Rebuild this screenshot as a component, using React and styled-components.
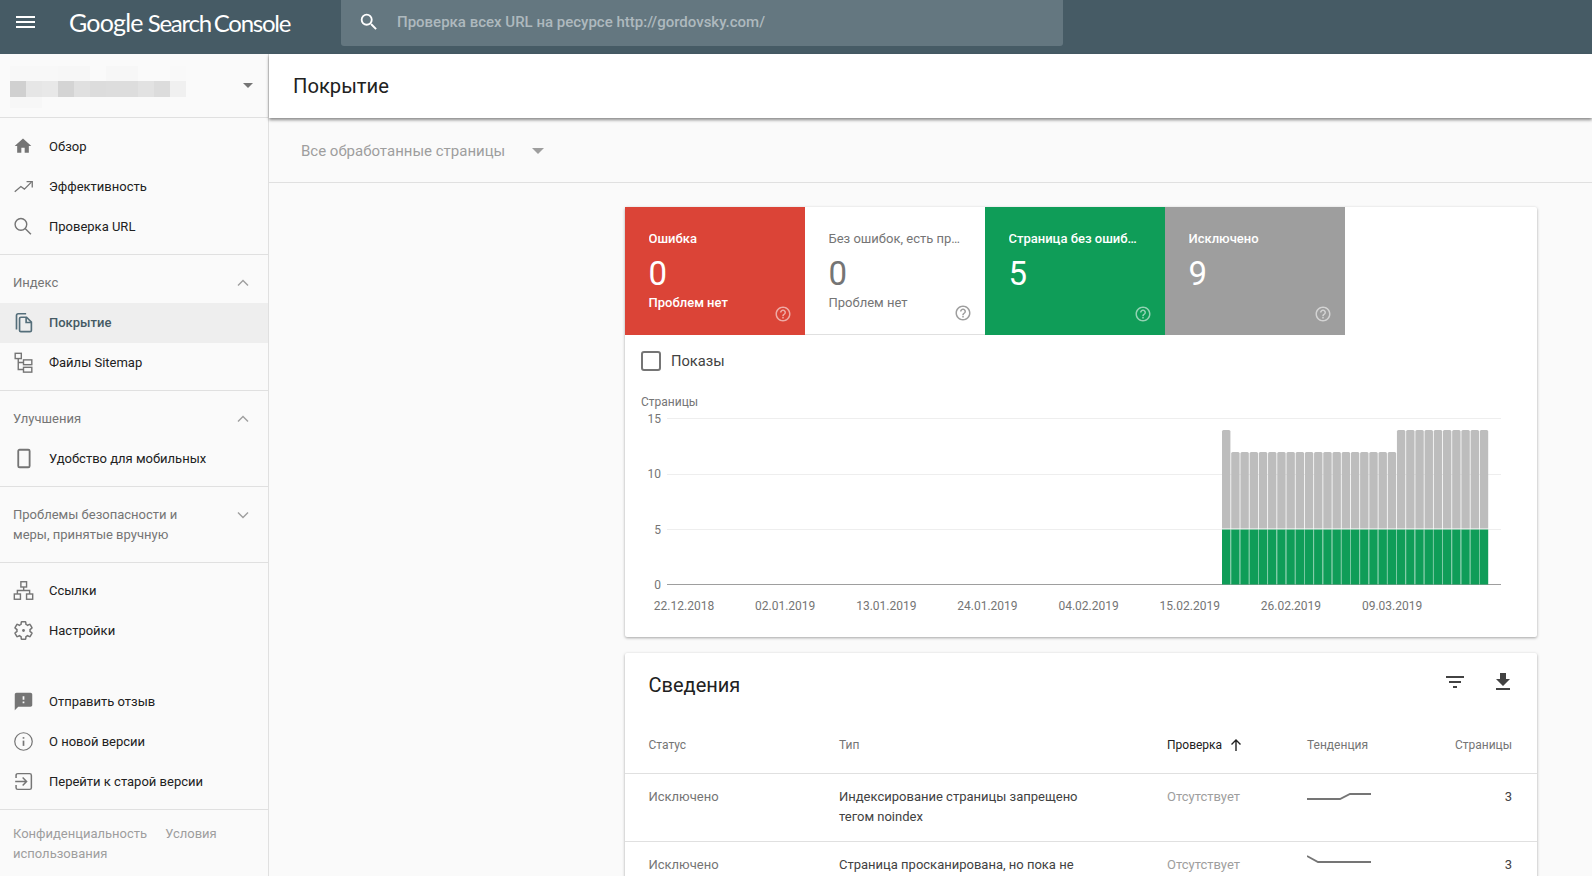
import React from 'react';
import styled, { createGlobalStyle } from 'styled-components';

const Global = createGlobalStyle`
  html, body { margin: 0; padding: 0; height: 100%; overflow: hidden; background: #fafafa; }
  body { font-family: Roboto, "Liberation Sans", sans-serif; color: #212121; }
  * { box-sizing: border-box; }
`;

const Page = styled.div`display: flex; flex-direction: column; height: 876px; overflow: hidden;`;
const TopBar = styled.header`height: 54px; flex: none; background: #465b65; display: flex; align-items: flex-start;`;
const MenuBtn = styled.div`width: 51px; height: 44px; display: flex; align-items: center; justify-content: center; color: #fff;`;
const Logo = styled.div`
  width: 290px; height: 44px; display: flex; align-items: center; padding-left: 18px; color: #fff;
  font-family: Lato, sans-serif; white-space: pre;
`;
const LogoBrand = styled.span`font-size: 25px; font-weight: 400; letter-spacing: -0.8px; margin-right: 5px;`;
const LogoProduct = styled.span`font-size: 24px; font-weight: 400; letter-spacing: -1.25px; word-spacing: -2px;`;
const SearchBox = styled.div`
  width: 722px; height: 46px; background: #647780; border-radius: 0 0 3px 3px;
  display: flex; align-items: center; padding: 0 0 2px 17px; gap: 17px; color: #fff;
`;
const SearchText = styled.span`font-size: 15px; font-weight: 500; color: #aeb9be;`;

const Body = styled.div`display: flex; flex: 1; min-height: 0;`;
const Side = styled.aside`width: 269px; flex: none; border-right: 1px solid #e0e0e0; background: #fafafa;`;
const Picker = styled.div`height: 64px; display: flex; align-items: center; justify-content: space-between; padding: 3px 15px 0 10px; border-bottom: 1px solid #e0e0e0;`;
const Mosaic = styled.div`display: flex; flex-direction: column;`;
const MosaicRow = styled.div`display: flex; height: ${p => p.$h}px;`;
const MosaicCell = styled.div`width: 16px; height: 100%; background: ${p => p.$c};`;
const Caret = styled.div`
  width: 0; height: 0; margin-bottom: ${p => p.$mb || 0}px;
  border-left: ${p => p.$s || 5}px solid transparent; border-right: ${p => p.$s || 5}px solid transparent;
  border-top: ${p => p.$s || 5}px solid ${p => p.$c || '#757575'};
`;

const Group = styled.div`
  border-bottom: ${p => p.$noline ? 'none' : '1px solid #e0e0e0'};
  padding: ${p => p.$pad || '9px 0'};
`;
const Item = styled.div`
  height: 40px; display: flex; align-items: center; padding: 0 0 ${p => p.$flat ? 0 : 2}px 13px;
  background: ${p => p.$active ? '#eeeeee' : 'transparent'};
  color: ${p => p.$active ? '#455a64' : '#212121'};
  font-size: 13px; font-weight: ${p => p.$active ? 500 : 400};
`;
const ItemIcon = styled.span`width: 36px; flex: none; display: flex; align-items: center; color: ${p => p.$c || '#757575'};`;
const SectionHead = styled.div`
  display: flex; justify-content: space-between; align-items: ${p => p.$top ? 'flex-start' : 'center'};
  padding: ${p => p.$top ? '10px 19px 0 13px' : '0 19px 0 13px'};
  height: ${p => p.$h || 40}px; color: #757575; font-size: 13px; line-height: 20px;
`;
const ChevWrap = styled.span`display: flex; margin-top: ${p => p.$mt || 0}px;`;
const Foot = styled.div`padding: 14px 13px 0; color: #9e9e9e; font-size: 13px; line-height: 20px;`;
const FootLink = styled.span`display: inline-block; margin-right: ${p => p.$mr || 0}px;`;

const Main = styled.main`flex: 1; min-width: 0; display: flex; flex-direction: column;`;
const TitleBar = styled.div`
  height: 64px; flex: none; background: #fff; display: flex; align-items: center; padding-left: 24px;
  font-size: 20.2px; font-weight: 400; color: #212121; box-shadow: 0 2px 3px rgba(0,0,0,.45); position: relative; z-index: 1;
`;
const FilterBar = styled.div`
  height: 65px; flex: none; display: flex; align-items: center; border-bottom: 1px solid #e0e0e0;
  padding: 2px 0 0 32px; gap: 27px; color: #9e9e9e; font-size: 15px;
`;
const Content = styled.div`width: 912px; margin: 24px 0 0 356px; display: flex; flex-direction: column; gap: 16px;`;
const Card = styled.section`background: #fff; border-radius: 2px; box-shadow: 0 1px 3px rgba(0,0,0,.35);`;
const Tiles = styled.div`display: flex;`;
const Tile = styled.div`
  width: 180px; height: 128px; padding: 23px 23px 0 23.5px; position: relative;
  background: ${p => p.$bg}; color: ${p => p.$fg};
  border-bottom: ${p => p.$bg === '#fff' ? '1px solid #e0e0e0' : 'none'};
`;
const TileLabel = styled.div`
  font-size: 13px; line-height: 17px; font-weight: ${p => p.$bold ? 500 : 400};
  white-space: nowrap; overflow: hidden; text-overflow: ellipsis; width: 132px;
`;
const TileNum = styled.div`font-size: 33px; line-height: 40px; margin-top: 7px;`;
const TileSub = styled.div`font-size: 13px; line-height: 17px; font-weight: ${p => p.$bold ? 500 : 400};`;
const TileHelp = styled.span`position: absolute; right: 13px; bottom: 12px; display: flex; opacity: ${p => p.$o || 1};`;
const CheckRow = styled.div`display: flex; align-items: center; gap: 10px; height: 52px; padding: 0 0 0 16px; font-size: 14.7px; color: #424242;`;
const Check = styled.div`width: 20px; height: 20px; border: 2px solid #757575; border-radius: 3px;`;
const Chart = styled.svg`display: block; width: 912px; height: 250px;`;
const DetailHead = styled.div`height: 72px; display: flex; align-items: center; justify-content: space-between; padding: 0 22px 8px 23.5px;`;
const DetailTitle = styled.h2`margin: 0; font-size: 20px; font-weight: 400; color: #212121;`;
const Tools = styled.div`display: flex; gap: 24px; margin-top: -7px;`;
const Row = styled.div`
  display: grid; grid-template-columns: 190.5px 328px 140px 1fr 70px; padding: 0 25px 0 23.5px;
  border-bottom: 1px solid #e0e0e0; font-size: 13px; line-height: 20px;
  height: ${p => p.$h}px; align-items: ${p => p.$head ? 'center' : 'start'};
  padding-top: ${p => p.$head ? 0 : 13}px;
  padding-bottom: ${p => p.$head ? 9 : 0}px;
`;
const HeadCell = styled.div`color: ${p => p.$on ? '#212121' : '#757575'}; display: flex; align-items: center; justify-content: ${p => p.$right ? 'flex-end' : 'flex-start'}; gap: 7px; font-size: 12px;`;
const Cell = styled.div`color: ${p => p.$c || '#757575'}; text-align: ${p => p.$right ? 'right' : 'left'};`;
const TypeCell = styled(Cell)`width: 260px;`;

const Svg = ({ s = 20, children }) => (
  <svg width={s} height={s} viewBox="0 0 24 24" fill="currentColor">{children}</svg>
);
const Line = ({ s = 21, w = 1.6, children }) => (
  <svg width={s} height={s} viewBox="0 0 24 24" fill="none" stroke="currentColor" strokeWidth={w}>{children}</svg>
);
const Help = ({ c }) => (
  <svg width="18" height="18" viewBox="0 0 24 24" fill={c}>
    <path d="M11 18h2v-2h-2v2zm1-16C6.48 2 2 6.48 2 12s4.48 10 10 10 10-4.48 10-10S17.52 2 12 2zm0 18c-4.41 0-8-3.59-8-8s3.59-8 8-8 8 3.59 8 8-3.59 8-8 8zm0-14c-2.21 0-4 1.79-4 4h2c0-1.1.9-2 2-2s2 .9 2 2c0 2-3 1.75-3 5h2c0-2.25 3-2.5 3-5 0-2.21-1.79-4-4-4z"/>
  </svg>
);
const Chev = ({ up }) => (
  <svg width="12" height="8" viewBox="0 0 12 8" fill="none" stroke="#9e9e9e" strokeWidth="1.4">
    <path d={up ? 'M1 6.5l5-5 5 5' : 'M1 1.5l5 5 5-5'} />
  </svg>
);

const ICONS = {
  home: <Svg><path d="M10 20v-6h4v6h5v-8h3L12 3 2 12h3v8z"/></Svg>,
  trend: <Line w={1.5}><path d="M2 18l7-6 4 3 8-8"/><path d="M15.5 6.5H22V13" /></Line>,
  search: <Line s={20} w={1.7}><circle cx="9.5" cy="10" r="7"/><path d="M14.5 15l7 7"/></Line>,
  copy: <Line w={1.9}><path d="M4 20V4a2 2 0 0 1 2-2h9"/><path d="M9 6h6.5L21 11.5V21a1.5 1.5 0 0 1-1.5 1.5H9A1.5 1.5 0 0 1 7.5 21V7.5A1.5 1.5 0 0 1 9 6z"/><path d="M15 6.5V12h5.5"/></Line>,
  sitemap: <Line w={1.6}><rect x="2.5" y="1.5" width="7" height="6"/><rect x="12" y="9" width="9.5" height="5.5"/><rect x="12" y="17.5" width="9.5" height="5.5"/><path d="M6 7.5V20h6M6 12h6"/></Line>,
  phone: <Line w={2.1}><rect x="6" y="2" width="13" height="20" rx="1.5"/></Line>,
  links: <Line w={1.6}><rect x="9" y="2" width="6.5" height="6"/><rect x="1.5" y="16" width="7" height="6"/><rect x="15.5" y="16" width="7" height="6"/><path d="M12.2 8v4M5 16v-4h14v4"/></Line>,
  gear: <Line w={1.7}><path d="M19.43 12.98c.04-.32.07-.64.07-.98s-.03-.66-.07-.98l2.11-1.65c.19-.15.24-.42.12-.64l-2-3.46c-.12-.22-.39-.3-.61-.22l-2.49 1c-.52-.4-1.08-.73-1.69-.98l-.38-2.65A.49.49 0 0 0 14 2h-4c-.25 0-.46.18-.49.42l-.38 2.65c-.61.25-1.17.59-1.69.98l-2.49-1a.5.5 0 0 0-.61.22l-2 3.46c-.13.22-.07.49.12.64l2.11 1.65c-.04.32-.07.65-.07.98s.03.66.07.98l-2.11 1.65c-.19.15-.24.42-.12.64l2 3.46c.12.22.39.3.61.22l2.49-1c.52.4 1.08.73 1.69.98l.38 2.65c.03.24.24.42.49.42h4c.25 0 .46-.18.49-.42l.38-2.65c.61-.25 1.17-.59 1.69-.98l2.49 1c.23.09.49 0 .61-.22l2-3.46c.12-.22.07-.49-.12-.64l-2.11-1.65z"/><circle cx="12" cy="12" r="1.6" fill="currentColor" stroke="none"/></Line>,
  feedback: <Svg s={21}><path d="M20 2H4c-1.1 0-1.99.9-1.99 2L2 22l4-4h14c1.1 0 2-.9 2-2V4c0-1.1-.9-2-2-2zm-7 12h-2v-2h2v2zm0-4h-2V6h2v4z"/></Svg>,
  info: <Line w={1.4}><circle cx="12" cy="12" r="10"/><path d="M12 11v6" strokeWidth="1.9"/><path d="M12 7v1.8" strokeWidth="1.9"/></Line>,
  exit: <Line w={1.7}><path d="M3.5 8V5A2 2 0 0 1 5.5 3H19a2 2 0 0 1 2 2v14a2 2 0 0 1-2 2H5.5a2 2 0 0 1-2-2v-3"/><path d="M2.5 12h13M11 7.5l4.5 4.5-4.5 4.5"/></Line>,
};

const NavItem = ({ icon, label, active, flat }) => (
  <Item $active={active} $flat={flat}>
    <ItemIcon $c={active ? '#546e7a' : undefined}>{ICONS[icon]}</ItemIcon>
    {label}
  </Item>
);

const MOSAIC = [
  { h: 15, cells: ['#f8f8f8','#f8f8f8','#f8f8f8','#f7f7f7','#f7f7f7','#fafafa','#f7f7f7','#f7f7f7','#fafafa','#fafafa','#f9f9f9'] },
  { h: 16, cells: ['#d0d0d0','#e6e6e6','#e8e8e8','#d4d4d4','#e0e0e0','#dcdcdc','#dddddd','#dddddd','#e2e2e2','#dcdcdc','#f0f0f0'] },
  { h: 11, cells: ['#f7f7f7','#f7f7f7','#fafafa','#fafafa','#fafafa','#fafafa','#fafafa','#fafafa','#fafafa','#fafafa','#fafafa'] },
];

const BAR_X0 = 1222 - 625;
const PITCH = 267 / 29;
const levels = Array.from({ length: 29 }, (_, i) => (i === 0 || i >= 19 ? 14 : 12));
const dates = ['22.12.2018','02.01.2019','13.01.2019','24.01.2019','04.02.2019','15.02.2019','26.02.2019','09.03.2019'];

const Spark = ({ d }) => (
  <svg width="66" height="16" viewBox="0 0 66 16" fill="none" stroke="#757575" strokeWidth="1.8"><path d={d} /></svg>
);

export default function App() {
  return (
    <Page>
      <Global />
      <TopBar>
        <MenuBtn>
          <svg width="19" height="12" viewBox="0 0 19 12" fill="#fff"><path d="M0 0h19v2H0zM0 5h19v2H0zM0 10h19v2H0z"/></svg>
        </MenuBtn>
        <Logo><LogoBrand>Google</LogoBrand><LogoProduct>Search Console</LogoProduct></Logo>
        <SearchBox>
          <Svg s={22}><path d="M15.5 14h-.79l-.28-.27A6.47 6.47 0 0 0 16 9.5 6.5 6.5 0 1 0 9.5 16c1.61 0 3.09-.59 4.23-1.57l.27.28v.79l5 4.99L20.49 19l-4.99-5zm-6 0C7.01 14 5 11.99 5 9.5S7.01 5 9.5 5 14 7.01 14 9.5 11.99 14 9.5 14z"/></Svg>
          <SearchText>Проверка всех URL на ресурсе http://gordovsky.com/</SearchText>
        </SearchBox>
      </TopBar>
      <Body>
        <Side>
          <Picker>
            <Mosaic aria-hidden="true">
              {MOSAIC.map((r, i) => (
                <MosaicRow key={i} $h={r.h}>
                  {r.cells.map((c, j) => <MosaicCell key={j} $c={c} />)}
                </MosaicRow>
              ))}
            </Mosaic>
            <Caret $mb={4} />
          </Picker>
          <Group $pad="8px 0 8px">
            <NavItem flat icon="home" label="Обзор" />
            <NavItem flat icon="trend" label="Эффективность" />
            <NavItem flat icon="search" label="Проверка URL" />
          </Group>
          <Group $pad="8px 0 7px">
            <SectionHead>Индекс<Chev up /></SectionHead>
            <NavItem icon="copy" label="Покрытие" active />
            <NavItem icon="sitemap" label="Файлы Sitemap" />
          </Group>
          <Group $pad="8px 0 7px">
            <SectionHead>Улучшения<Chev up /></SectionHead>
            <NavItem icon="phone" label="Удобство для мобильных" />
          </Group>
          <Group $pad="8px 0 0">
            <SectionHead $top $h={67}>
              <span>Проблемы безопасности и<br />меры, принятые вручную</span>
              <ChevWrap $mt={6}><Chev /></ChevWrap>
            </SectionHead>
          </Group>
          <Group $pad="8px 0 0" $noline>
            <NavItem icon="links" label="Ссылки" />
            <NavItem icon="gear" label="Настройки" />
          </Group>
          <Group $pad="31px 0 7px">
            <NavItem icon="feedback" label="Отправить отзыв" />
            <NavItem icon="info" label="О новой версии" />
            <NavItem icon="exit" label="Перейти к старой версии" />
          </Group>
          <Foot>
            <FootLink $mr={18}>Конфиденциальность</FootLink>
            <FootLink>Условия</FootLink>{' '}
            <FootLink>использования</FootLink>
          </Foot>
        </Side>
        <Main>
          <TitleBar>Покрытие</TitleBar>
          <FilterBar>
            Все обработанные страницы
            <Caret $c="#9e9e9e" $s={6} />
          </FilterBar>
          <Content>
            <Card>
              <Tiles>
                <Tile $bg="#db4437" $fg="#fff">
                  <TileLabel $bold>Ошибка</TileLabel>
                  <TileNum>0</TileNum>
                  <TileSub $bold>Проблем нет</TileSub>
                  <TileHelp $o=".55"><Help c="#fff" /></TileHelp>
                </Tile>
                <Tile $bg="#fff" $fg="#757575">
                  <TileLabel>Без ошибок, есть проблемы</TileLabel>
                  <TileNum>0</TileNum>
                  <TileSub>Проблем нет</TileSub>
                  <TileHelp><Help c="#9e9e9e" /></TileHelp>
                </Tile>
                <Tile $bg="#0f9d58" $fg="#fff">
                  <TileLabel $bold>Страница без ошибок</TileLabel>
                  <TileNum>5</TileNum>
                  <TileHelp $o=".55"><Help c="#fff" /></TileHelp>
                </Tile>
                <Tile $bg="#9e9e9e" $fg="#fff">
                  <TileLabel $bold>Исключено</TileLabel>
                  <TileNum>9</TileNum>
                  <TileHelp $o=".55"><Help c="#fff" /></TileHelp>
                </Tile>
              </Tiles>
              <CheckRow><Check />Показы</CheckRow>
              <Chart viewBox="0 0 912 250">
                <g fontFamily="Roboto, sans-serif" fontSize="12" fill="#757575">
                  <text x="16" y="19">Страницы</text>
                  {[[15, 31, 31], [10, 87, 86], [5, 142, 142], [0, 197, 197]].map(([v, y, ly]) => (
                    <g key={v}>
                      <text x="36" y={ly + 4.5} textAnchor="end">{v}</text>
                      <line x1="42" x2="876" y1={y + 0.5} y2={y + 0.5} stroke={v === 0 ? '#9e9e9e' : '#eeeeee'} />
                    </g>
                  ))}
                  {dates.map((d, i) => (
                    <text key={d} x={59 + i * 101.15} y="222.5" textAnchor="middle">{d}</text>
                  ))}
                </g>
                {levels.map((lv, i) => {
                  const x = BAR_X0 + i * PITCH;
                  const top = 197 - 55 - (lv - 5) * 11;
                  const w = PITCH - 0.8;
                  return (
                    <g key={i}>
                      <path d={`M${x} 141.5 V${top + 1.5} Q${x} ${top} ${x + 1.5} ${top} H${x + w - 1.5} Q${x + w} ${top} ${x + w} ${top + 1.5} V141.5 Z`} fill="#bdbdbd" />
                      <rect x={x} y="142.5" width={w} height="55" fill="#0f9d58" />
                      {i < 28 && <rect x={x + w} y="142.5" width="0.8" height="55" fill="#6fc59b" />}
                    </g>
                  );
                })}
              </Chart>
            </Card>
            <Card>
              <DetailHead>
                <DetailTitle>Сведения</DetailTitle>
                <Tools>
                  <Svg s={24}><path fill="#424242" d="M10 18h4v-2h-4v2zM3 6v2h18V6H3zm3 7h12v-2H6v2z"/></Svg>
                  <Svg s={24}><path fill="#424242" d="M19 9h-4V3H9v6H5l7 7 7-7zM5 18v2h14v-2H5z"/></Svg>
                </Tools>
              </DetailHead>
              <Row $head $h={49}>
                <HeadCell>Статус</HeadCell>
                <HeadCell>Тип</HeadCell>
                <HeadCell $on>
                  Проверка
                  <svg width="14" height="14" viewBox="0 0 14 14" fill="none" stroke="#212121" strokeWidth="1.4"><path d="M7 13V2M2.5 6.5L7 2l4.5 4.5"/></svg>
                </HeadCell>
                <HeadCell>Тенденция</HeadCell>
                <HeadCell $right>Страницы</HeadCell>
              </Row>
              <Row $h={68}>
                <Cell>Исключено</Cell>
                <TypeCell $c="#424242">Индексирование страницы запрещено тегом noindex</TypeCell>
                <Cell $c="#9e9e9e">Отсутствует</Cell>
                <Spark d="M0 12 H33 L43 7 H64" />
                <Cell $right $c="#424242">3</Cell>
              </Row>
              <Row $h={68}>
                <Cell>Исключено</Cell>
                <TypeCell $c="#424242">Страница просканирована, но пока не проиндексирована</TypeCell>
                <Cell $c="#9e9e9e">Отсутствует</Cell>
                <Spark d="M0 1 L11 7 H64" />
                <Cell $right $c="#424242">3</Cell>
              </Row>
            </Card>
          </Content>
        </Main>
      </Body>
    </Page>
  );
}
